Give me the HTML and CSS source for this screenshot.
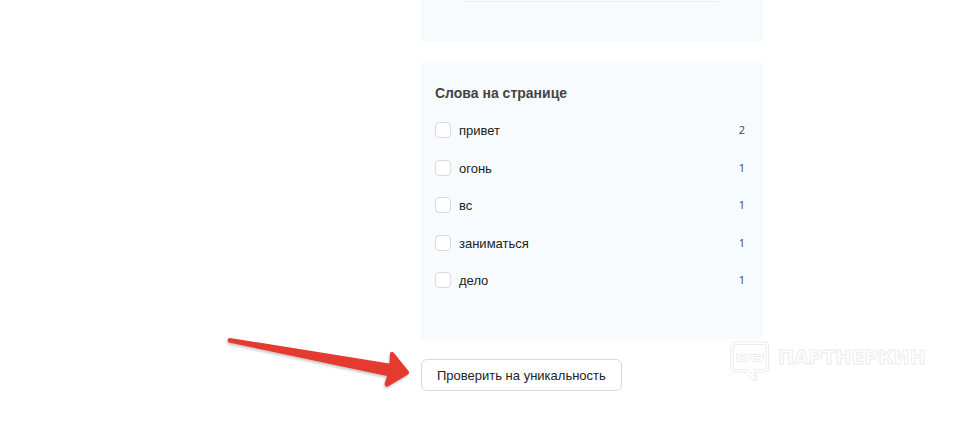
FILE: index.html
```
<!DOCTYPE html>
<html lang="ru">
<head>
  <meta charset="UTF-8">
  <meta name="viewport" content="width=device-width, initial-scale=1">
  <title>Слова на странице</title>
  <link rel="stylesheet" href="styles.css">
</head>
<body>
  <main class="page">
    <div class="content">
      <section class="card card-top">
        <hr class="divider">
      </section>

      <section class="card words">
        <h2 class="words-title">Слова на странице</h2>
        <ul class="words-list">
          <li class="word"><label><input type="checkbox"><span class="name">привет</span></label><span class="count">2</span></li>
          <li class="word"><label><input type="checkbox"><span class="name">огонь</span></label><span class="count">1</span></li>
          <li class="word"><label><input type="checkbox"><span class="name">вс</span></label><span class="count">1</span></li>
          <li class="word"><label><input type="checkbox"><span class="name">заниматься</span></label><span class="count">1</span></li>
          <li class="word"><label><input type="checkbox"><span class="name">дело</span></label><span class="count">1</span></li>
        </ul>
      </section>

      <div class="actions">
        <button type="button" class="check-button">Проверить на уникальность</button>
        <!-- Arrow pointing at the button -->
        <svg class="arrow" width="190" height="60" viewBox="0 0 190 60" aria-hidden="true">
          <path d="M5 7 Q2.500 7 2.500 9.500 Q3 11.500 6 12 L162 45 L159.500 53 Q160 56.500 163 55.500 L183 43.500 Q185 42 183.500 40 L169 22 Q166 19.500 165 22.500 L164.500 32.500 Z"/>
        </svg>
      </div>
    </div>
  </main>

  <!-- Watermark -->
  <div class="watermark">
    <svg class="watermark-logo" width="40" height="42" viewBox="0 0 40 42" aria-hidden="true">
      <path d="M4 1H35Q38.500 1 38.500 4V28Q38.500 31 35 31H26.500V40L23.500 39.500L15 31H4Q1 31 1 28V4Q1 1 4 1Z"/>
      <path d="M5 3.500H34.500Q36 3.500 36 5V27Q36 28.500 34.500 28.500H24.500V35.500L17 28.500H5Q3.500 28.500 3.500 27V5Q3.500 3.500 5 3.500Z"/>
      <path d="M6.500 13.500H33.500V16L32.500 19.500Q32 20.500 31 20.500H24.500Q22.500 20.500 22 18.500L21.500 15.500H18.500L18 18.500Q17.500 20.500 15.500 20.500H9Q8 20.500 7.500 19.500L6.500 16ZM9.500 15.500H15.500V18.500H10.500ZM24.500 15.500H30.500L29.500 18.500H24.500Z"/>
    </svg>
    <svg class="watermark-name" width="150" height="24">
      <text x="0" y="19">ПАРТНЕРКИН</text>
    </svg>
  </div>
</body>
</html>
```
FILE: styles.css
```
* {
  box-sizing: border-box;
}

body {
  margin: 0;
  background: #fff;
  color: #222;
  font-family: "Liberation Sans", Arial, sans-serif;
  font-size: 13px;
  overflow-x: hidden;
}

.page {
  display: grid;
  grid-template-columns: 421fr 342fr 211fr;
}

.content {
  grid-column: 2;
  display: flex;
  flex-direction: column;
}

/* Cards */
.card {
  background: #f7fbfe;
}

.card-top {
  padding: 1px 44px 40px 43px;
  border-radius: 0 0 4px 4px;
}

.divider {
  height: 1px;
  margin: 0;
  border: 0;
  background: #ececec;
}

.words {
  margin-top: 21px;
  padding: 22px 18px 51px 14px;
}

.words-title {
  margin: 0 0 21px;
  color: #444;
  font-size: 14px;
  line-height: 16px;
}

.words-list {
  display: flex;
  flex-direction: column;
  justify-content: space-between;
  min-height: 166px;
  margin: 0;
  padding: 0;
  list-style: none;
}

.word {
  display: flex;
  align-items: center;
  justify-content: space-between;
  line-height: 16px;
}

.word label {
  display: flex;
  align-items: center;
  gap: 8px;
  height: 16px;
}

.word input {
  appearance: none;
  width: 16px;
  height: 16px;
  margin: 0;
  border: 1px solid #d9d9d9;
  border-radius: 4px;
  background: #fff;
}

.word input:checked {
  border-color: #1890ff;
  background: #1890ff;
}

.name {
  padding-top: 2px;
}

.count {
  color: #444;
  font-family: "Open Sans", sans-serif;
  font-size: 11px;
}

/* Button with the arrow */
.actions {
  position: relative;
  margin-top: 20px;
}

.check-button {
  height: 32px;
  padding: 0 15px;
  border: 1px solid #d9d9d9;
  border-radius: 6px;
  background: #fff;
  color: #222;
  font: inherit;
  cursor: pointer;
}

.arrow {
  position: absolute;
  top: -28px;
  right: 100%;
  margin-right: 6px;
  overflow: visible;
  fill: #e53a2f;
  filter: drop-shadow(-1px 2px 1px rgba(0, 0, 0, 0.2));
  pointer-events: none;
}

/* Watermark */
.watermark {
  position: absolute;
  top: 341px;
  right: 46px;
  display: flex;
  gap: 8px;
  fill: #fff;
  stroke: #ececec;
  pointer-events: none;
}

.watermark-name {
  margin-top: 4px;
  overflow: visible;
  font-family: "DejaVu Sans", sans-serif;
  font-size: 19px;
  font-weight: bold;
}
```
